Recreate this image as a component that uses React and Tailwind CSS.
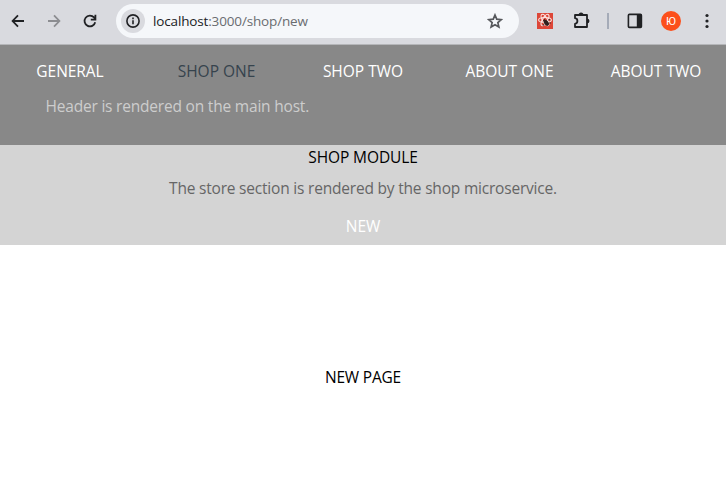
const links = [
  { label: "GENERAL", style: "text-white tracking-[-0.05px]" },
  { label: "SHOP ONE", style: "text-[#36434d] tracking-[0px]" },
  { label: "SHOP TWO", style: "text-white tracking-[0px]" },
  { label: "ABOUT ONE", style: "text-white tracking-[0px]" },
  { label: "ABOUT TWO", style: "text-white tracking-[0px]" },
];

function Toolbar() {
  return (
    <header className="flex h-[45px] items-start border-b border-[#b5b6b9] bg-[#d9dadf] pt-1 text-[#202124]">
      <div className="flex h-[34px] w-[116px] shrink-0 items-center gap-[18px] pl-[9px]">
        <svg className="size-[18px]" viewBox="0 0 18 18" fill="none" stroke="currentColor" strokeWidth="1.8">
          <path d="M15 9H4M9 3.4 3.6 9 9 14.6" />
        </svg>
        <svg className="size-[18px] text-[#8c8d91]" viewBox="0 0 18 18" fill="none" stroke="currentColor" strokeWidth="1.8">
          <path d="M3 9h11M9 3.4 14.4 9 9 14.6" />
        </svg>
        <svg className="size-[18px]" viewBox="0 0 18 18" fill="none" stroke="currentColor" strokeWidth="1.8">
          <path d="M14.2 10.2A5.4 5.4 0 1 1 13 5.4L14.2 7M14.4 2.8v4.8H9.8" />
        </svg>
      </div>
      <div className="flex h-[34px] w-[403px] shrink-0 items-center rounded-full bg-[#f5f7fa] pr-4 pl-[5px]">
        <span className="flex size-6 items-center justify-center rounded-full bg-[#d9dadf]">
          <svg className="size-4" viewBox="0 0 16 16" fill="none" stroke="currentColor" strokeWidth="1.6">
            <circle cx="8" cy="8" r="6.1" />
            <path d="M8 7.2v4M8 4.6v1.6" />
          </svg>
        </span>
        <span className="ml-2 flex-1 font-['Open_Sans',sans-serif] text-[13.5px] leading-[18px] tracking-[-0.15px] text-[#696c70]">
          <span className="text-[#202124]">localhost</span>:3000/shop/new
        </span>
        <svg className="size-4 text-[#56585c]" viewBox="0 0 16 16" fill="none" stroke="currentColor" strokeWidth="1.7">
          <path d="m8 2 1.75 4.2 4.55.4-3.45 3 1.05 4.45L8 11.7l-3.9 2.35L5.15 9.6 1.7 6.6l4.55-.4z" />
        </svg>
      </div>
      <div className="flex h-[34px] flex-1 items-center">
        <svg className="ml-[18px] size-4" viewBox="0 0 16 16">
          <rect width="16" height="16" fill="#dd4638" />
          <g fill="none" stroke="#fbe5e1" strokeWidth="1.1">
            <ellipse cx="8" cy="7" rx="6.4" ry="2.5" />
            <ellipse cx="8" cy="7" rx="6.4" ry="2.5" transform="rotate(60 8 7)" />
            <ellipse cx="8" cy="7" rx="6.4" ry="2.5" transform="rotate(120 8 7)" />
          </g>
          <ellipse cx="9.3" cy="9.8" rx="2.1" ry="3.4" fill="#30201e" transform="rotate(-35 9.3 9.8)" />
          <path d="m6 8 2-2M11 7l2-.5M12 10h2M7 11l-1 2" stroke="#30201e" strokeWidth=".8" />
        </svg>
        <svg className="ml-[19px] size-5" viewBox="0 0 20 20" fill="none" stroke="currentColor" strokeWidth="1.8" strokeLinejoin="round">
          <path d="M3 4h12v12H3v-3.2c3.2-.4 3.2-5.2 0-5.6z" />
          <path d="M7.4 4a1.6 1.6 0 0 1 3.2 0M15 8.4a1.6 1.6 0 0 1 0 3.2" fill="currentColor" />
        </svg>
        <span className="ml-[15px] h-4 w-0.5 bg-[#a5abb8]" />
        <svg className="ml-[18px] size-4" viewBox="0 0 16 16">
          <rect x="1.4" y="1.4" width="13" height="13" rx="1" fill="none" stroke="currentColor" strokeWidth="1.6" />
          <path d="M9.8 1.4h4.6v13H9.8z" fill="currentColor" />
        </svg>
        <span className="ml-[18px] flex size-5 items-center justify-center rounded-full bg-[#fc4f1b] font-['Roboto',sans-serif] text-[11px] leading-none text-white">Ю</span>
        <svg className="ml-[17px] size-[18px]" viewBox="0 0 18 18" fill="currentColor">
          <circle cx="9" cy="3.5" r="1.6" />
          <circle cx="9" cy="9" r="1.6" />
          <circle cx="9" cy="14.5" r="1.6" />
        </svg>
      </div>
    </header>
  );
}

export default function App() {
  return (
    <div className="h-[490px] w-[726px] overflow-hidden bg-white font-['Open_Sans',sans-serif] text-[15.5px] leading-6 whitespace-nowrap">
      <Toolbar />
      <div className="h-[100px] bg-[#888888] pt-[14px]">
        <nav className="flex justify-between px-5">
          {links.map((link) => (
            <a key={link.label} className={`flex w-[100px] justify-center ${link.style}`}>{link.label}</a>
          ))}
        </nav>
        <p className="mt-[11px] pl-[45.5px] tracking-[-0.2px] text-[#cdcdcd]">Header is rendered on the main host.</p>
      </div>
      <section className="flex h-[100px] flex-col items-center bg-[#d4d4d4]">
        <h1 className="tracking-[-0.1px] text-black">SHOP MODULE</h1>
        <p className="mt-[7px] tracking-[-0.2px] text-[#666666]">The store section is rendered by the shop microservice.</p>
        <a className="mt-[14px] font-medium tracking-[-0.1px] text-white">NEW</a>
      </section>
      <main className="flex justify-center pt-[120px] tracking-[-0.2px] text-black">NEW PAGE</main>
    </div>
  );
}
